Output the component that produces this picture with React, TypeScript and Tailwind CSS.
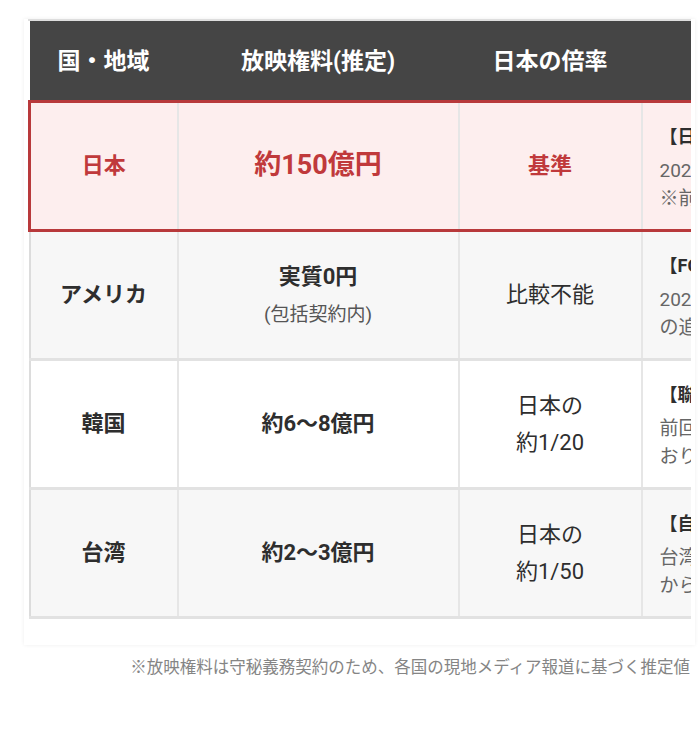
const rows = [
  {
    country: '日本',
    fee: '約150億円',
    rate: ['基準'],
    src: '【日本：NHK・民放連合】',
    l1: '2026年大会の放映権料は過去最高水準',
    l2: '※前回大会から大幅に高騰',
    hl: true,
    bg: 'bg-[#fdeeee]',
  },
  {
    country: 'アメリカ',
    fee: '実質0円',
    sub: '(包括契約内)',
    rate: ['比較不能'],
    src: '【FOX / Telemundo】',
    l1: '2026年大会は長期包括契約に含まれ',
    l2: 'の追加負担はなし',
    bg: 'bg-[#f7f7f7]',
  },
  {
    country: '韓国',
    fee: '約6〜8億円',
    rate: ['日本の', '約1/20'],
    src: '【聯合ニュース】',
    l1: '前回大会から上昇傾向となって',
    l2: 'おり、交渉は難航',
    bg: 'bg-white',
  },
  {
    country: '台湾',
    fee: '約2〜3億円',
    rate: ['日本の', '約1/50'],
    src: '【自由時報】',
    l1: '台湾の放映権は地元局が取得',
    l2: 'から配信される見込み',
    bg: 'bg-[#f7f7f7]',
  },
];

export default function App() {
  return (
    <div
      className="w-[698px] h-[729px] overflow-hidden bg-white"
      style={{ fontFamily: 'Roboto, "Noto Sans CJK JP", sans-serif' }}
    >
      {/* card */}
      <div className="ml-[24px] mt-[19px] w-[671px] bg-white pl-[4px] pb-[26px] shadow-[0_0_4px_rgba(0,0,0,0.07)]">
        <div className="w-[663px] overflow-hidden border-t-2 border-[#dedede]">
          <table className="table-fixed border-collapse w-[912px]">
            <colgroup>
              <col className="w-[148px]" />
              <col className="w-[281px]" />
              <col className="w-[183px]" />
              <col className="w-[300px]" />
            </colgroup>
            <thead>
              <tr className="bg-[#454545] h-[80px] text-white text-[23px] font-bold">
                <th className="text-center pt-[4px]">国・地域</th>
                <th className="text-center pt-[4px]">放映権料(推定)</th>
                <th className="text-center pt-[4px]">日本の倍率</th>
                <th className="text-center pt-[4px]">情報ソース</th>
              </tr>
            </thead>
            <tbody>
              {rows.map((r) => {
                const edge = r.hl
                  ? 'border-y-[3px] border-y-[#b8393b]'
                  : 'border-y-[3px] border-y-[#e2e2e2]';
                const txt = r.hl ? 'text-[#c0393b]' : 'text-[#2e2e2e]';
                return (
                  <tr key={r.country} className={r.bg}>
                    <td
                      className={`${edge} border-r-2 border-r-[#e6e6e6] text-center text-[22px] font-bold ${txt} ${
                        r.hl ? 'border-l-[3px] border-l-[#b8393b]' : 'border-l-2 border-l-[#dcdcdc]'
                      }`}
                    >
                      {r.country}
                    </td>
                    <td className={`${edge} border-x-2 border-x-[#e6e6e6] text-center ${txt}`}>
                      <div className={`font-bold ${r.hl ? 'text-[27px]' : 'text-[22px]'}`}>{r.fee}</div>
                      {r.sub && <div className="mt-[8px] text-[19px] text-[#555]">{r.sub}</div>}
                    </td>
                    <td
                      className={`${edge} border-x-2 border-x-[#e6e6e6] text-center text-[22px] leading-[37px] ${txt} ${
                        r.hl ? 'font-bold' : 'font-normal'
                      }`}
                    >
                      {r.rate.map((t) => (
                        <div key={t}>{t}</div>
                      ))}
                    </td>
                    <td className={`${edge} border-l-2 border-l-[#e6e6e6] pl-[17px] pr-[18px] pt-[22px] pb-[16px] whitespace-nowrap`}>
                      <div className="text-[18px] leading-[24px] font-bold text-[#2e2e2e]">{r.src}</div>
                      <div className="mt-[8px] text-[19px] leading-[28px] text-[#666]">
                        <div>{r.l1}</div>
                        <div>{r.l2}</div>
                      </div>
                    </td>
                  </tr>
                );
              })}
            </tbody>
          </table>
        </div>
      </div>

      <p className="mt-[11px] pr-[8px] text-right text-[16.5px] text-[#858585]">
        ※放映権料は守秘義務契約のため、各国の現地メディア報道に基づく推定値
      </p>
    </div>
  );
}
